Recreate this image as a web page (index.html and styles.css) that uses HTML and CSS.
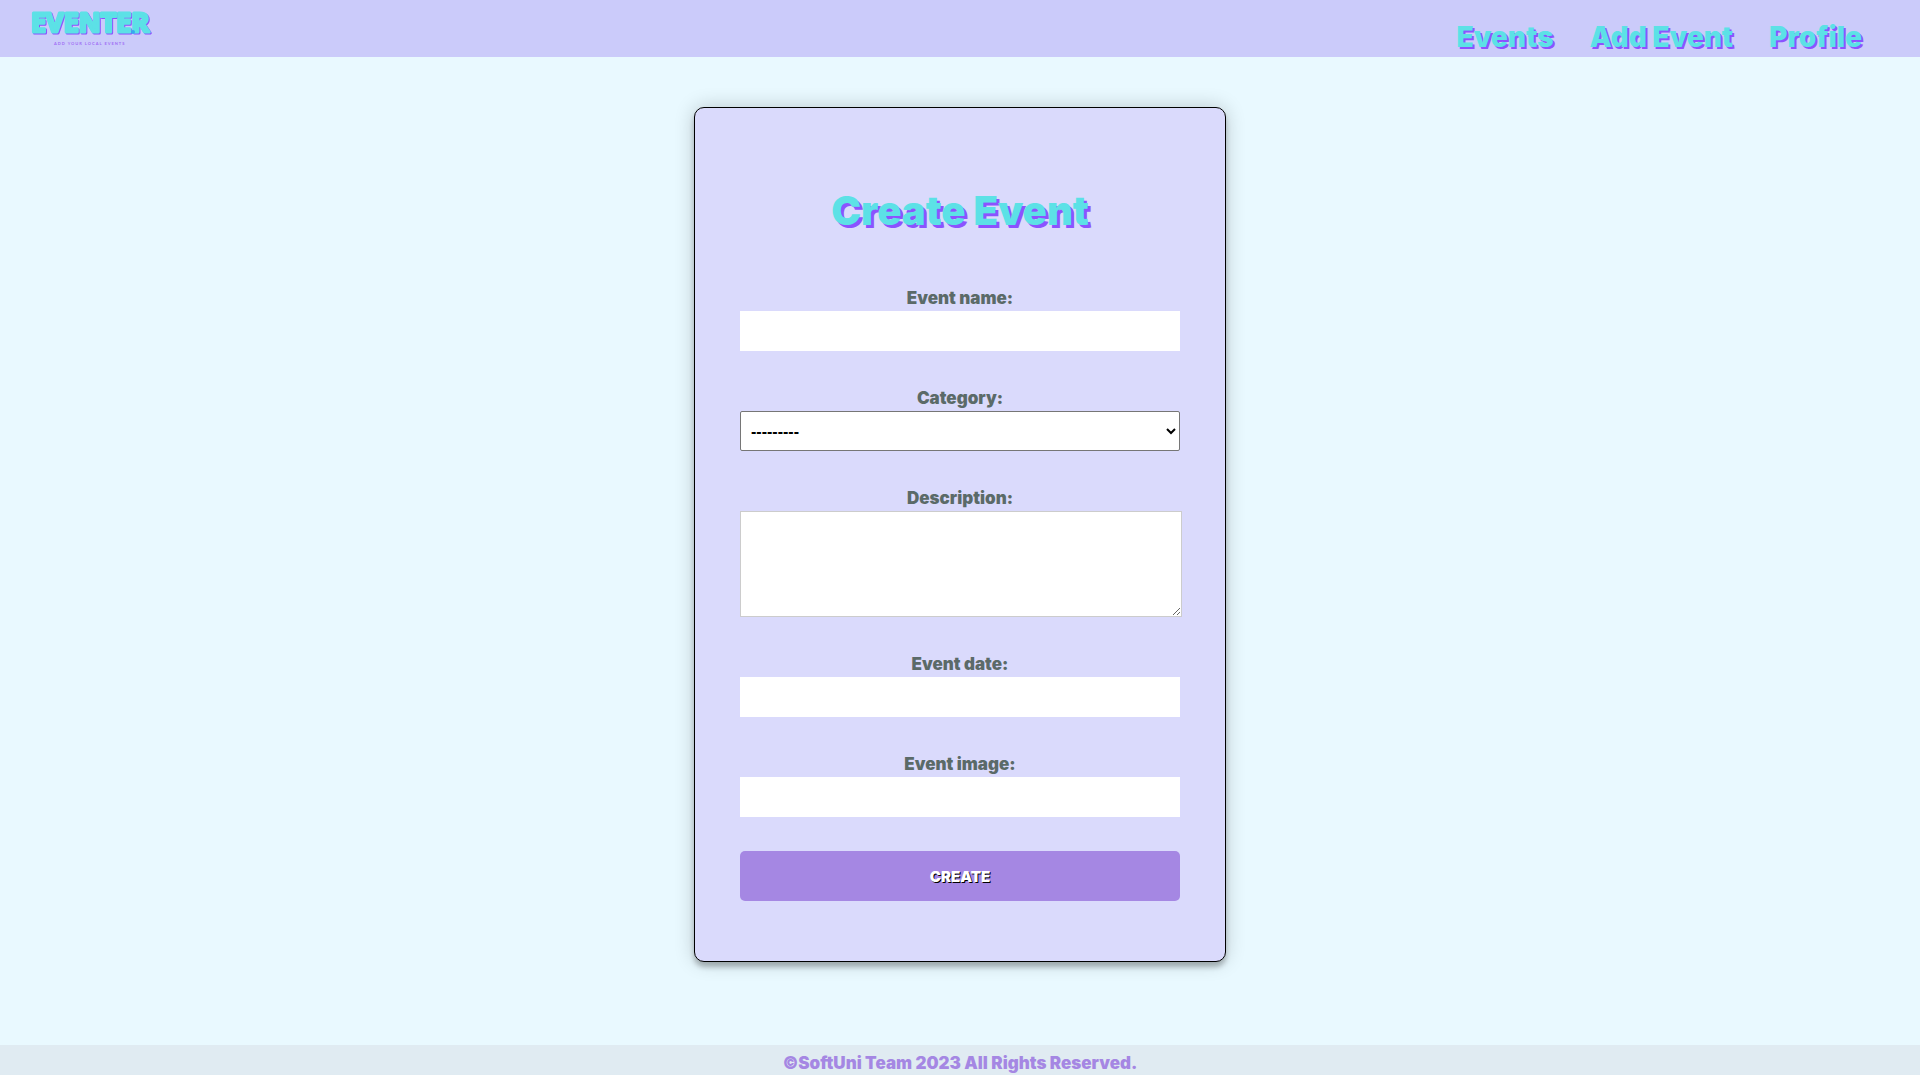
FILE: index.html
```html
<!DOCTYPE html>
<html lang="en">
<head>
<meta charset="utf-8">
<meta name="viewport" content="width=device-width, initial-scale=1">
<title>Create Event</title>
<link rel="stylesheet" href="styles.css">
</head>
<body>
<header class="site-header">
  <a class="logo" href="#" aria-label="Eventer home">
    <svg class="logo-mark" viewBox="0 0 126 46" width="126" height="46">
      <text class="logo-word" x="1" y="27">EVENTER</text>
      <circle class="logo-dot" cx="103" cy="27" r="2"/>
      <text class="logo-tagline" x="24" y="40">ADD YOUR LOCAL EVENTS</text>
    </svg>
  </a>
  <nav class="site-nav">
    <a href="#">Events</a>
    <a href="#">Add Event</a>
    <a href="#">Profile</a>
  </nav>
</header>
<main class="page">
  <form class="card">
    <h1 class="card-title">Create Event</h1>
    <div class="field">
      <label for="name">Event name:</label>
      <input id="name" type="text">
    </div>
    <div class="field">
      <label for="category">Category:</label>
      <select id="category"><option>---------</option></select>
    </div>
    <div class="field">
      <label for="description">Description:</label>
      <textarea id="description"></textarea>
    </div>
    <div class="field">
      <label for="date">Event date:</label>
      <input id="date" type="text">
    </div>
    <div class="field">
      <label for="image">Event image:</label>
      <input id="image" type="text">
    </div>
    <button class="submit" type="button">CREATE</button>
  </form>
</main>
<footer class="site-footer">©SoftUni Team 2023 All Rights Reserved.</footer>
</body>
</html>
```
FILE: styles.css
```css
body {
  margin: 0;
  min-height: 100vh;
  display: flex;
  flex-direction: column;
  background: #e9f9ff;
  font-family: Inter, "Liberation Sans", sans-serif;
  font-weight: 900;
}

.site-header {
  display: flex;
  justify-content: space-between;
  align-items: flex-end;
  padding: 5px 58px 0 30px;
  min-height: 52px;
  background: #cbcbfa;
}

.logo {
  align-self: flex-start;
}

.logo-mark {
  display: block;
  overflow: visible;
}

.logo-word {
  font-family: "Noto Sans", sans-serif;
  font-size: 27px;
  font-weight: 700;
  fill: #5ce1e6;
  stroke: #5ce1e6;
  stroke-width: 3px;
  stroke-linejoin: round;
  filter: drop-shadow(1px 1px 0 #8c52ff);
}

.logo-dot {
  fill: #38a8f0;
}

.logo-tagline {
  font-family: Lato, sans-serif;
  font-size: 4px;
  font-weight: 700;
  letter-spacing: 1px;
  fill: #a06cf5;
}

.site-nav {
  display: flex;
  gap: 36px;
  padding-bottom: 3px;
}

.site-nav a {
  color: #5ce1e6;
  font-size: 28px;
  line-height: 34px;
  text-decoration: none;
  text-shadow: 2px 2px #8c52ff;
}

.page {
  flex: 1;
  padding: 50px 16px 83px;
}

.card {
  box-sizing: border-box;
  max-width: 532px;
  margin: 0 auto;
  padding: 77px 45px 60px;
  border: 1px solid #000;
  border-radius: 10px;
  background: #dadafc;
  box-shadow: 0 0 20px rgba(0, 0, 0, 0.2), 0 5px 5px rgba(0, 0, 0, 0.24);
}

.card-title {
  margin: 0 0 48px;
  color: #5ce1e6;
  font-size: 40px;
  font-weight: 900;
  line-height: 52px;
  text-align: center;
  text-shadow: 3px 3px #8c52ff;
}

.field {
  margin-bottom: 34px;
}

.field label {
  display: block;
  height: 26px;
  color: #5b6a68;
  font-size: 17px;
  line-height: 26px;
  text-align: center;
}

.field input,
.field select {
  display: block;
  box-sizing: border-box;
  width: 100%;
  height: 40px;
  padding: 0 12px;
  border: 0;
  background: #fff;
  font: 700 16px "Liberation Sans", sans-serif;
}

.field select {
  padding: 0 6px;
  border: 1px solid #767676;
  border-radius: 2px;
  color: #000;
}

.field textarea {
  display: block;
  width: 100%;
  height: 104px;
  padding: 0;
  border: 1px solid #ccc;
  resize: both;
}

.submit {
  display: block;
  width: 100%;
  height: 50px;
  border: 0;
  border-radius: 5px;
  background: #a587e3;
  color: #fff;
  font: 900 15px Inter, sans-serif;
  text-shadow: 1px 1px #000;
}

.site-footer {
  padding-top: 5px;
  height: 25px;
  background: #e0ebf2;
  color: #a587e3;
  font-size: 17px;
  line-height: 26px;
  text-align: center;
}
```
